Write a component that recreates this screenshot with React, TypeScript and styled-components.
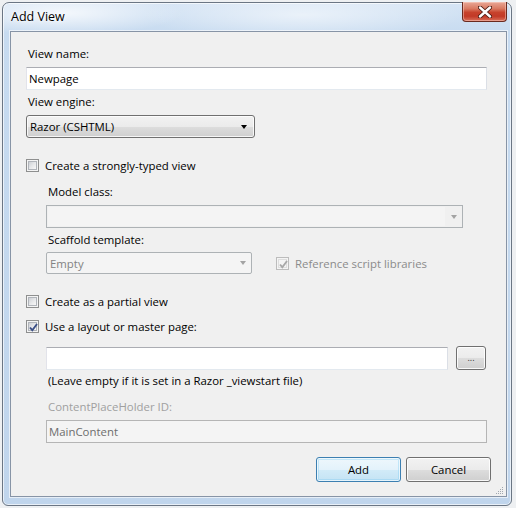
import styled, { createGlobalStyle } from 'styled-components';

const GlobalStyle = createGlobalStyle`
  html, body {
    margin: 0;
    padding: 0;
    background: #eef0f2;
  }
  body {
    font-family: 'Segoe UI', 'Open Sans', sans-serif;
    font-size: 11.4px;
    color: #000;
  }
`;

export default function App() {
  return (
    <Page>
      <GlobalStyle />
      <Window>
        <TitleBar>
          <Title>Add View</Title>
          <CloseButton>
            <svg width="14" height="12" viewBox="0 0 14 12">
              <path d="M2 1.5 L12 10.5 M12 1.5 L2 10.5" stroke="#4a1a12" strokeWidth="4.2" strokeLinecap="round" />
              <path d="M2 1.5 L12 10.5 M12 1.5 L2 10.5" stroke="#fff" strokeWidth="2.4" strokeLinecap="round" />
            </svg>
          </CloseButton>
        </TitleBar>

        <Client>
          <Label $mt={14}>View name:</Label>
          <TextBox $mt={6} $w={461}>Newpage</TextBox>

          <Label $mt={4}>View engine:</Label>
          <DropDown $mt={6} $w={229}>
            <span>Razor (CSHTML)</span>
            <Arrow />
          </DropDown>

          <CheckRow $mt={20}>
            <CheckBox />
            <span>Create a strongly-typed view</span>
          </CheckRow>

          <Indent>
            <Label $mt={11}>Model class:</Label>
            <ComboDisabled $mt={6} $w={417}>
              <ComboField />
              <Arrow $disabled />
            </ComboDisabled>

            <Label $mt={4}>Scaffold template:</Label>
            <Row $mt={5}>
              <DropDownDisabled $w={206}>
                <span>Empty</span>
                <Arrow $disabled />
              </DropDownDisabled>
              <CheckRow $disabled>
                <CheckBox $checked $disabled />
                <span>Reference script libraries</span>
              </CheckRow>
            </Row>
          </Indent>

          <CheckRow $mt={20}>
            <CheckBox />
            <span>Create as a partial view</span>
          </CheckRow>
          <CheckRow $mt={10}>
            <CheckBox $checked />
            <span>Use a layout or master page:</span>
          </CheckRow>

          <Indent>
            <Row $mt={12}>
              <TextBox $w={402} />
              <BrowseButton>...</BrowseButton>
            </Row>
            <Label $mt={3}>(Leave empty if it is set in a Razor _viewstart file)</Label>

            <Label $mt={11} $disabled>ContentPlaceHolder ID:</Label>
            <TextBox $mt={6} $w={441} $disabled>MainContent</TextBox>
          </Indent>

          <ButtonBar>
            <PushButton $default>Add</PushButton>
            <PushButton>Cancel</PushButton>
          </ButtonBar>

          <SizeGrip>
            <svg width="8" height="8" viewBox="0 0 8 8">
              {[
                [6, 0],
                [4, 2],
                [6, 2],
                [2, 4],
                [4, 4],
                [6, 4],
                [0, 6],
                [2, 6],
                [4, 6],
                [6, 6],
              ].map(([x, y]) => (
                <rect key={`${x}-${y}`} x={x} y={y} width="1" height="1" fill="#a0a7b0" />
              ))}
            </svg>
          </SizeGrip>
        </Client>
      </Window>
    </Page>
  );
}

const Page = styled.div`
  padding: 2px 0 0 2px;
`;

const Window = styled.div`
  width: 510px;
  box-sizing: border-box;
  border: 1px solid #6b7684;
  border-radius: 7px 7px 6px 6px;
  padding: 0 4px 8px 7px;
  background:
    radial-gradient(ellipse 120px 22px at 60px 10px, rgba(255, 255, 255, 0.75), transparent),
    radial-gradient(ellipse 160px 26px at 300px 12px, rgba(255, 255, 255, 0.55), transparent),
    linear-gradient(180deg, #d6e5f5 0px, #c7dbf0 30px, #c0d5ec 100%);
  box-shadow: inset 0 0 0 1px rgba(255, 255, 255, 0.65);
  display: flex;
  flex-direction: column;
`;

const TitleBar = styled.div`
  height: 28px;
  display: flex;
  align-items: flex-start;
  justify-content: space-between;
`;

const Title = styled.div`
  margin: 6px 0 0 1px;
  font-size: 12.5px;
  line-height: 15px;
  color: #000;
  text-shadow: 0 0 6px #fff, 0 0 3px #fff;
`;

const CloseButton = styled.div`
  margin-top: -1px;
  width: 45px;
  height: 20px;
  box-sizing: border-box;
  border: 1px solid #6a2a1f;
  border-top: none;
  border-radius: 0 0 4px 4px;
  background: linear-gradient(180deg, #e9a897 0%, #d97a62 35%, #c7422c 55%, #c23a27 75%, #d9705a 100%);
  box-shadow: inset 0 0 0 1px rgba(255, 220, 210, 0.45);
  display: flex;
  align-items: center;
  justify-content: center;
`;

const Client = styled.div`
  position: relative;
  border: 1px solid #8794a6;
  background: #f0f0f0;
  padding: 0 19px 14px 15px;
  display: flex;
  flex-direction: column;
  align-items: flex-start;
  box-shadow: 0 0 0 1px rgba(255, 255, 255, 0.6);
`;

const Label = styled.div<{ $mt?: number; $disabled?: boolean }>`
  margin-top: ${(p) => p.$mt ?? 0}px;
  padding-left: 2px;
  height: 15px;
  line-height: 15px;
  white-space: nowrap;
  color: ${(p) => (p.$disabled ? '#a0a0a0' : '#000')};
`;

const Indent = styled.div`
  padding-left: 20px;
  display: flex;
  flex-direction: column;
  align-items: flex-start;
`;

const Row = styled.div<{ $mt?: number }>`
  margin-top: ${(p) => p.$mt ?? 0}px;
  display: flex;
  align-items: center;
  gap: 24px;
`;

const TextBox = styled.div<{ $mt?: number; $w: number; $disabled?: boolean }>`
  margin-top: ${(p) => p.$mt ?? 0}px;
  width: ${(p) => p.$w}px;
  height: 23px;
  box-sizing: border-box;
  border: 1px solid;
  border-color: ${(p) => (p.$disabled ? '#b5b5b5' : '#abadb3 #dbdfe6 #e3e9ef #e2e3ea')};
  background: ${(p) => (p.$disabled ? '#f4f4f4' : '#fff')};
  color: ${(p) => (p.$disabled ? '#6d6d6d' : '#000')};
  padding: 0 2px;
  line-height: 21px;
  white-space: nowrap;
`;

const DropDown = styled.div<{ $mt?: number; $w: number }>`
  margin-top: ${(p) => p.$mt ?? 0}px;
  width: ${(p) => p.$w}px;
  height: 23px;
  box-sizing: border-box;
  border: 1px solid #707070;
  border-radius: 3px;
  background: linear-gradient(180deg, #f2f2f2 0%, #ebebeb 50%, #dddddd 51%, #cfcfcf 100%);
  box-shadow: inset 0 0 0 1px rgba(255, 255, 255, 0.8);
  display: flex;
  align-items: center;
  justify-content: space-between;
  padding: 0 7px 0 3px;
`;

const DropDownDisabled = styled.div<{ $w: number }>`
  width: ${(p) => p.$w}px;
  height: 22px;
  box-sizing: border-box;
  border: 1px solid #adb2b5;
  border-radius: 2px;
  background: #f4f4f4;
  color: #838383;
  display: flex;
  align-items: center;
  justify-content: space-between;
  padding: 0 5px 0 3px;
`;

const ComboDisabled = styled.div<{ $mt?: number; $w: number }>`
  margin-top: ${(p) => p.$mt ?? 0}px;
  width: ${(p) => p.$w}px;
  height: 23px;
  box-sizing: border-box;
  border: 1px solid #adb2b5;
  background: #f0f0f0;
  display: flex;
  align-items: stretch;
  padding: 1px 5px 1px 1px;
  gap: 6px;
`;

const ComboField = styled.div`
  flex: 1;
  background: #f4f4f4;
`;

const Arrow = styled.div<{ $disabled?: boolean }>`
  align-self: center;
  width: 0;
  height: 0;
  border-left: 3.5px solid transparent;
  border-right: 3.5px solid transparent;
  border-top: 4px solid ${(p) => (p.$disabled ? '#a3a3a3' : '#000')};
`;

const CheckRow = styled.div<{ $mt?: number; $disabled?: boolean }>`
  margin-top: ${(p) => p.$mt ?? 0}px;
  display: flex;
  align-items: center;
  gap: 6px;
  height: 15px;
  line-height: 15px;
  white-space: nowrap;
  color: ${(p) => (p.$disabled ? '#8b8b8b' : '#000')};
`;

const CheckBoxFrame = styled.div<{ $disabled?: boolean }>`
  width: 13px;
  height: 13px;
  box-sizing: border-box;
  border: 1px solid ${(p) => (p.$disabled ? '#bcbcbc' : '#8e8f8f')};
  background: #f4f4f4;
  padding: 1px;
  position: relative;
`;

const CheckBoxInner = styled.div<{ $disabled?: boolean }>`
  width: 100%;
  height: 100%;
  box-sizing: border-box;
  border: 1px solid ${(p) => (p.$disabled ? '#dedede' : '#b0b4ba')};
  background: ${(p) =>
    p.$disabled ? '#f4f4f4' : 'linear-gradient(135deg, #cdd0d5 0%, #e6e7e9 50%, #f7f7f7 100%)'};
`;

const CheckMark = styled.svg`
  position: absolute;
  left: 1px;
  top: 1px;
`;

const CheckBox = ({ $checked, $disabled }: { $checked?: boolean; $disabled?: boolean }) => (
  <CheckBoxFrame $disabled={$disabled}>
    <CheckBoxInner $disabled={$disabled} />
    {$checked && (
      <CheckMark width="11" height="11" viewBox="0 0 11 11">
        <path
          d="M2 5.5 L4.3 8.2 L9 2"
          fill="none"
          stroke={$disabled ? '#a8a8a8' : '#3b4f86'}
          strokeWidth="1.9"
        />
      </CheckMark>
    )}
  </CheckBoxFrame>
);

const ButtonBase = styled.div`
  box-sizing: border-box;
  border: 1px solid #707070;
  border-radius: 3px;
  background: linear-gradient(180deg, #f2f2f2 0%, #ebebeb 50%, #dddddd 51%, #cfcfcf 100%);
  box-shadow: inset 0 0 0 1px rgba(255, 255, 255, 0.85);
  display: flex;
  align-items: center;
  justify-content: center;
`;

const BrowseButton = styled(ButtonBase)`
  margin-left: -16px;
  width: 30px;
  height: 24px;
  font-size: 9px;
  color: #333;
  padding-bottom: 2px;
`;

const ButtonBar = styled.div`
  margin-top: 14px;
  align-self: flex-end;
  margin-right: -4px;
  display: flex;
  gap: 5px;
`;

const PushButton = styled(ButtonBase)<{ $default?: boolean }>`
  width: 85px;
  height: 25px;
  ${(p) =>
    p.$default &&
    `
    border-color: #3c7fb1;
    background: linear-gradient(180deg, #eef7fc 0%, #e3f2fb 50%, #d2ebf8 51%, #c4e3f4 100%);
    box-shadow: inset 0 0 0 1px rgba(255, 255, 255, 0.7), inset 0 0 0 2px rgba(120, 200, 240, 0.35);
  `}
`;

const SizeGrip = styled.div`
  position: absolute;
  right: 2px;
  bottom: 1px;
  line-height: 0;
`;
